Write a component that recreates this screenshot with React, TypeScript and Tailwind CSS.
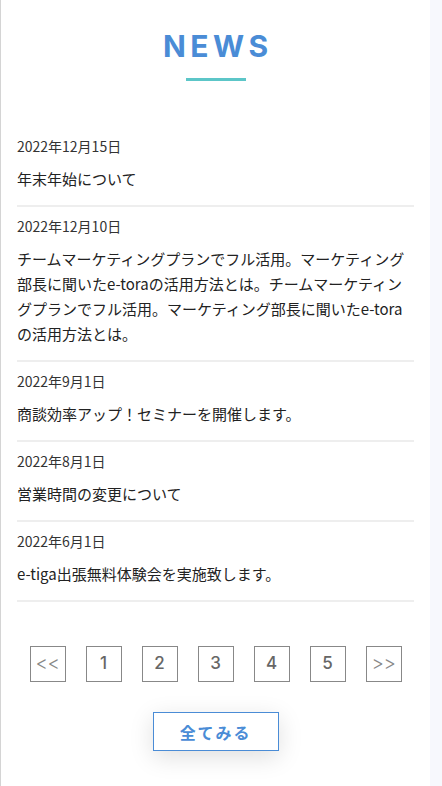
const news = [
  { date: '2022年12月15日', title: '年末年始について' },
  {
    date: '2022年12月10日',
    title:
      'チームマーケティングプランでフル活用。マーケティング部長に聞いたe-toraの活用方法とは。チームマーケティングプランでフル活用。マーケティング部長に聞いたe-toraの活用方法とは。',
  },
  { date: '2022年9月1日', title: '商談効率アップ！セミナーを開催します。' },
  { date: '2022年8月1日', title: '営業時間の変更について' },
  { date: '2022年6月1日', title: 'e-tiga出張無料体験会を実施致します。' },
];

const pages = ['<<', '1', '2', '3', '4', '5', '>>'];

export default function App() {
  return (
    <div className="flex h-[786px] w-full overflow-hidden bg-[#f7f8fd] font-['Noto_Sans_CJK_JP',sans-serif] text-[#222]">
      <main className="flex w-[430px] flex-col border-l border-[#d4d4d4] bg-white px-4">
        {/* Heading */}
        <div className="flex flex-col items-center pt-7">
          <h2 className="pl-[0.15em] font-['Inter',sans-serif] text-[30px] font-bold leading-[36px] tracking-[0.15em] text-[#4a8cd6]">
            NEWS
          </h2>
          <div className="mt-[14px] h-[3px] w-[60px] bg-[#5cc6c8]" />
        </div>

        {/* News list */}
        <ul className="mt-[46px]">
          {news.map((item) => (
            <li key={item.date} className="border-b-2 border-[#eeeeee] pt-[9px] pb-[14px]">
              <p className="text-[14px] leading-[21px] text-[#333]">{item.date}</p>
              <p className="mt-[9px] text-[15px] leading-[25px] text-[#222]">{item.title}</p>
            </li>
          ))}
        </ul>

        {/* Pagination */}
        <nav className="mt-[44px] flex justify-center gap-5">
          {pages.map((p) => (
            <a
              key={p}
              href="#"
              className="flex h-9 w-9 items-center justify-center border border-[#888] font-['Inter',sans-serif] text-[17px] font-medium text-[#666]"
            >
              {p === '<<' || p === '>>' ? (
                <span className="text-[19px] font-light tracking-[-0.02em] text-[#888]">{p}</span>
              ) : (
                p
              )}
            </a>
          ))}
        </nav>

        <div className="mt-[30px] flex justify-center">
          <button className="h-[39px] w-[126px] border border-[#4a8cd6] bg-white text-[16px] font-bold tracking-[0.12em] text-[#4a8cd6] shadow-[0_6px_24px_rgba(0,0,0,0.13)]">
            全てみる
          </button>
        </div>
      </main>
    </div>
  );
}
